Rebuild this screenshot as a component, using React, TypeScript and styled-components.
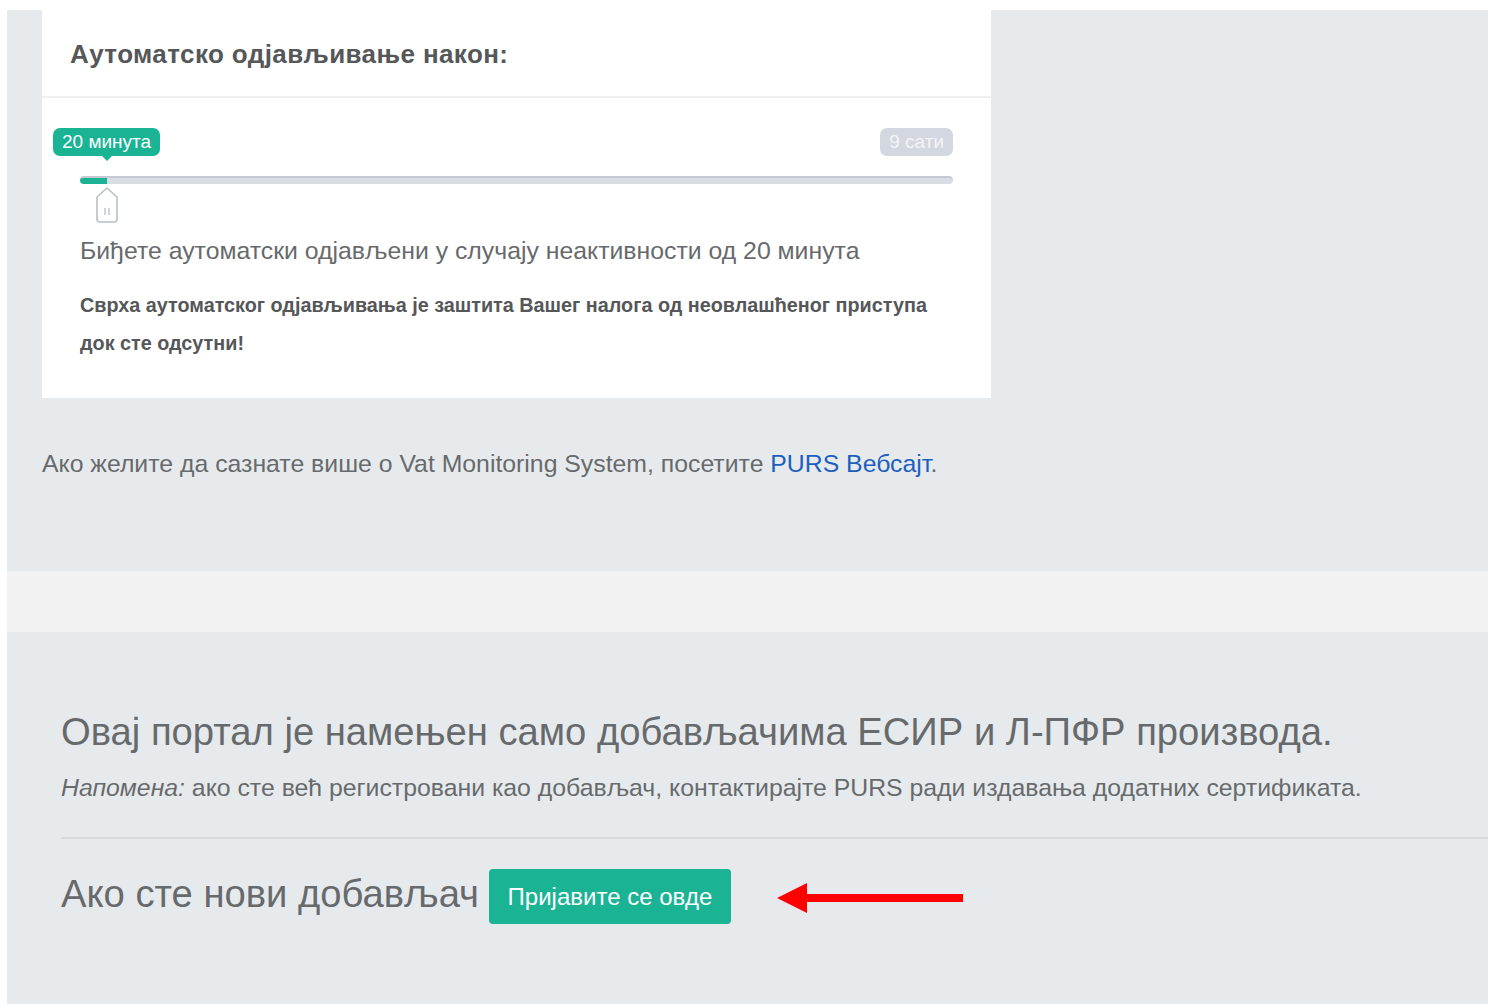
import React from "react";
import styled, { createGlobalStyle } from "styled-components";

const GlobalStyle = createGlobalStyle`
  html, body {
    margin: 0;
    padding: 0;
    background: #ffffff;
  }
  body {
    font-family: "Liberation Sans", Arial, sans-serif;
    color: #676a6c;
  }
`;

const Frame = styled.div`
  padding: 10px 7px 0 7px;
  width: 1495px;
  box-sizing: border-box;
`;

const UpperSection = styled.section`
  background: #e7eaed;
  height: 561px;
  padding-left: 35px;
  box-sizing: border-box;
`;

const Card = styled.div`
  width: 949px;
  background: #ffffff;
`;

const CardHeader = styled.div`
  height: 88px;
  display: flex;
  align-items: center;
  padding-left: 28px;
  border-bottom: 2px solid #eef0f2;
  box-sizing: border-box;
`;

const CardTitle = styled.h3`
  margin: 0;
  padding-top: 2px;
  font-size: 26px;
  letter-spacing: 0.4px;
  font-weight: 700;
  color: #555759;
`;

const CardBody = styled.div`
  padding: 30px 38px 36px 38px;
`;

const Slider = styled.div`
  position: relative;
  height: 94px;
`;

const Badge = styled.span<{ $active?: boolean }>`
  position: absolute;
  top: 0;
  height: 28px;
  line-height: 28px;
  padding: 0 9px;
  border-radius: 7px;
  font-size: 19px;
  font-family: "Liberation Sans", Arial, sans-serif;
  color: ${(p) => (p.$active ? "#ffffff" : "#f3f4f7")};
  background: ${(p) => (p.$active ? "#1ab394" : "#d3d7df")};
  white-space: nowrap;
  ${(p) =>
    p.$active
      ? `
    &::after {
      content: "";
      position: absolute;
      left: 50%;
      bottom: -5px;
      margin-left: -5px;
      border-left: 5px solid transparent;
      border-right: 5px solid transparent;
      border-top: 5px solid #1ab394;
    }
  `
      : ""}
`;

const Track = styled.div`
  position: absolute;
  top: 48px;
  left: 0;
  right: 0;
  height: 8px;
  border-radius: 4px;
  background: #d9dde4;
  border-top: 2px solid #c4c9d3;
  box-sizing: border-box;
  overflow: hidden;
`;

const TrackFill = styled.div`
  height: 100%;
  background: #1ab394;
`;

const Handle = styled.div`
  position: absolute;
  top: 58px;
  width: 28px;
  height: 38px;
`;

const InfoText = styled.p`
  margin: 14px 0 0 0;
  font-size: 24.8px;
  line-height: 30px;
  color: #676a6c;
`;

const Notice = styled.p`
  margin: 20px 0 0 0;
  font-size: 19.8px;
  line-height: 38px;
  font-weight: 700;
  color: #555759;
`;

const FooterNote = styled.p`
  margin: 51px 0 0 0;
  font-size: 24.8px;
  line-height: 30px;
  color: #676a6c;
`;

const Link = styled.a`
  color: #1c5fbf;
  text-decoration: none;
`;

const Band = styled.div`
  height: 61px;
  background: #f2f2f2;
`;

const LowerSection = styled.section`
  background: #e7eaed;
  height: 372px;
  padding: 78px 0 0 54px;
  box-sizing: border-box;
`;

const Lead = styled.h2`
  margin: 0;
  font-size: 38.2px;
  line-height: 44px;
  font-weight: 400;
  color: #676a6c;
`;

const Note = styled.p`
  margin: 19px 0 0 0;
  font-size: 24.8px;
  line-height: 30px;
  color: #676a6c;

  em {
    font-style: italic;
  }
`;

const Divider = styled.hr`
  margin: 34px 0 0 0;
  border: 0;
  border-top: 2px solid #d6d9dd;
`;

const SignupRow = styled.div`
  margin-top: 30px;
  display: flex;
  align-items: center;
  gap: 10px;
  height: 55px;
`;

const SignupLabel = styled.span`
  font-size: 38.2px;
  color: #676a6c;
  padding-bottom: 6px;
`;

const PrimaryButton = styled.button`
  height: 55px;
  width: 242px;
  border: 0;
  border-radius: 4px;
  background: #1ab394;
  color: #ffffff;
  font-family: "Liberation Sans", Arial, sans-serif;
  font-size: 24px;
  cursor: pointer;
`;

const Pointer = styled.svg`
  margin-left: 36px;
  margin-top: 2px;
`;

const HANDLE_POS = 27;

function HandleGrip() {
  return (
    <svg width="28" height="38" viewBox="0 0 28 38">
      <path
        d="M14 2 L24 11 L24 33 Q24 36 21 36 L7 36 Q4 36 4 33 L4 11 Z"
        fill="#ffffff"
        stroke="#b8beca"
        strokeWidth="1.6"
        strokeLinejoin="round"
      />
      <line x1="12" y1="22" x2="12" y2="29" stroke="#b8beca" strokeWidth="1.3" />
      <line x1="16" y1="22" x2="16" y2="29" stroke="#b8beca" strokeWidth="1.3" />
    </svg>
  );
}

export default function App() {
  return (
    <>
      <GlobalStyle />
      <Frame>
        <UpperSection>
          <Card>
            <CardHeader>
              <CardTitle>Аутоматско одјављивање након:</CardTitle>
            </CardHeader>
            <CardBody>
              <Slider>
                <Badge $active style={{ left: HANDLE_POS - 54 }}>20 минута</Badge>
                <Badge style={{ right: 0 }}>9 сати</Badge>
                <Track>
                  <TrackFill style={{ width: HANDLE_POS }} />
                </Track>
                <Handle style={{ left: HANDLE_POS - 14 }}>
                  <HandleGrip />
                </Handle>
              </Slider>
              <InfoText>
                Биђете аутоматски одјављени у случају неактивности од 20 минута
              </InfoText>
              <Notice>
                Сврха аутоматског одјављивања је заштита Вашег налога од неовлашћеног приступа
                <br />
                док сте одсутни!
              </Notice>
            </CardBody>
          </Card>
          <FooterNote>
            Ако желите да сазнате више о Vat Monitoring System, посетите{" "}
            <Link href="#">PURS Вебсајт</Link>.
          </FooterNote>
        </UpperSection>
        <Band />
        <LowerSection>
          <Lead>Овај портал је намењен само добављачима ЕСИР и Л-ПФР производа.</Lead>
          <Note>
            <em>Напомена:</em> ако сте већ регистровани као добављач, контактирајте PURS ради
            издавања додатних сертификата.
          </Note>
          <Divider />
          <SignupRow>
            <SignupLabel>Ако сте нови добављач</SignupLabel>
            <PrimaryButton>Пријавите се овде</PrimaryButton>
            <Pointer width="186" height="32" viewBox="0 0 186 32">
              <polygon points="0,16 30,1 30,12 186,12 186,20 30,20 30,31" fill="#ff0000" />
            </Pointer>
          </SignupRow>
        </LowerSection>
      </Frame>
    </>
  );
}
